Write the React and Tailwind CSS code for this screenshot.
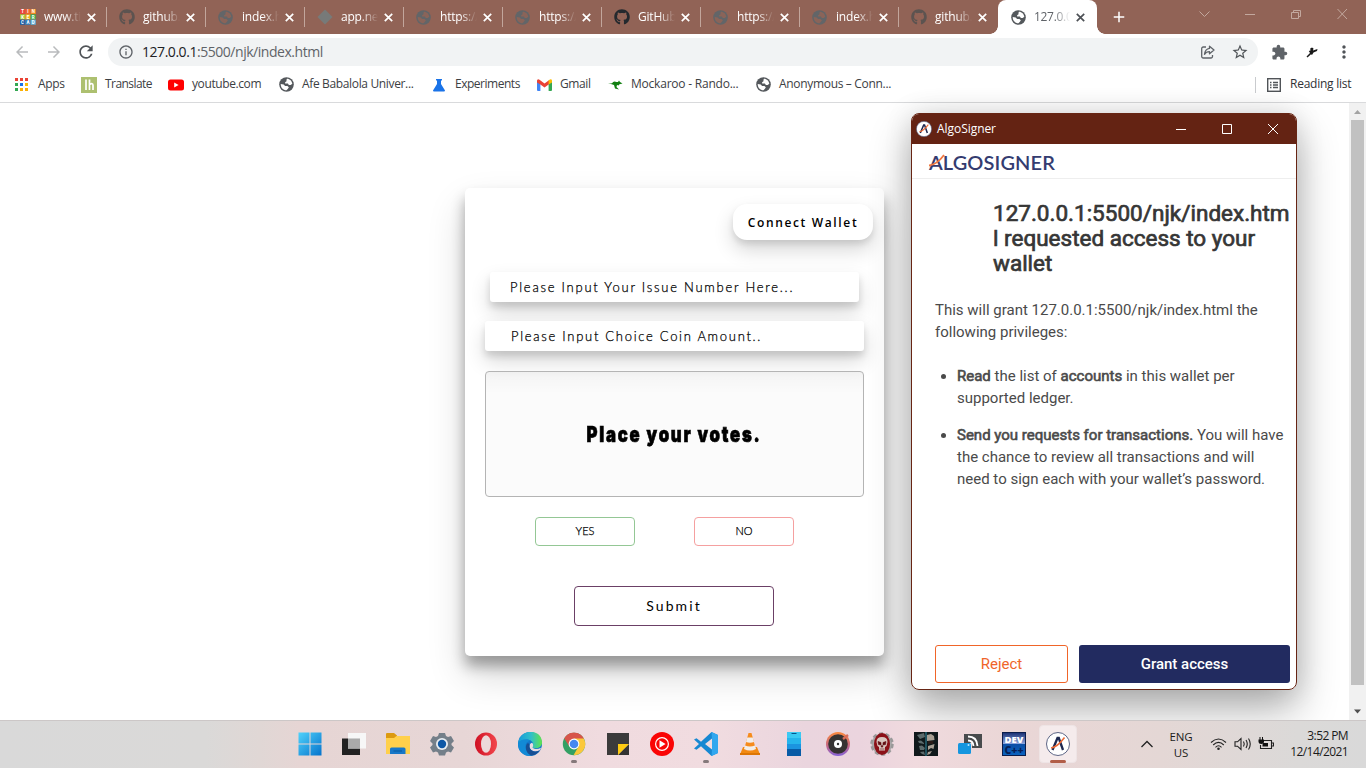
import React from "react";
import {
  MdRefresh, MdArrowBack, MdArrowForward, MdInfoOutline,
  MdStarBorder, MdExtension, MdMoreVert, MdAdd,
} from "react-icons/md";
import { FaGithub } from "react-icons/fa";

const UI = "font-['Open_Sans','Noto_Sans',sans-serif]";

function Tinkercad() {
  const rows = [
    ["#e8453c", "#f0642d", "#f58a1f", "TIN"],
    ["#a9c93a", "#f5b81f", "#3fae49", "KER"],
    ["#1d5fa8", "#2f7fc0", "#5fb3de", "CAD"],
  ];
  return (
    <svg width="16" height="16" viewBox="0 0 15 15" className="shrink-0">
      {rows.map((r, y) =>
        [0, 1, 2].map((x) => (
          <g key={`${x}${y}`}>
            <rect x={x * 5} y={y * 5} width="4.8" height="4.8" fill={r[x]} />
            <text x={x * 5 + 2.4} y={y * 5 + 4} fontSize="4.2" fontWeight="700" textAnchor="middle" fill="#fff" fontFamily="Roboto">{r[3][x]}</text>
          </g>
        ))
      )}
    </svg>
  );
}

function Globe({ fill, land }) {
  return (
    <svg width="15" height="15" viewBox="0 0 16 16" className="shrink-0">
      <circle cx="8" cy="8" r="7.800" fill={fill} />
      <path d="M8.500 1.800C11.500 1.800 14 4.300 14.200 7.300L12.500 8.500H10.500L9.500 7H6.500V5.500L8 4.500V3Z" fill={land} />
      <path d="M1.800 7.500 5 8 6.500 9.500H9L10.500 11 9.500 12.500 8 14.200C4.500 14.200 1.800 11.500 1.800 7.500Z" fill={land} />
    </svg>
  );
}

function Cross({ color, className }) {
  return (
    <svg width="9" height="9" viewBox="0 0 9 9" className={`shrink-0 ${className}`}><path d="M.8.8 8.200 8.200M8.200.8.8 8.200" stroke={color} strokeWidth="1.700" /></svg>
  );
}

const tabs = [
  { kind: "tinker", label: "www.tinkercad" },
  { kind: "github", label: "github.com" },
  { kind: "globe", label: "index.html" },
  { kind: "diamond", label: "app.netlify" },
  { kind: "globe", label: "https://127" },
  { kind: "globe", label: "https://127" },
  { kind: "githubDark", label: "GitHub - C" },
  { kind: "globe", label: "https://127" },
  { kind: "globe", label: "index.html" },
  { kind: "github", label: "github.com" },
];

function TabIcon({ kind }) {
  if (kind === "tinker") return <Tinkercad />;
  if (kind === "github") return <FaGithub size={16} color="#5c5350" className="shrink-0" />;
  if (kind === "githubDark") return <FaGithub size={16} color="#24292e" className="shrink-0" />;
  if (kind === "diamond")
    return (
      <svg width="16" height="16" viewBox="0 0 16 16" className="shrink-0"><path d="M8 0.5 15.500 8 8 15.500.5 8Z" fill="#777a79" /></svg>
    );
  return <div className="flex w-4 shrink-0"><Globe fill="#626568" land="#8a6459" /></div>;
}

function TabBar() {
  return (
    <div className="flex h-[34px] shrink-0 bg-[#916356] pl-[9px]">
      {tabs.map((t, i) => (
        <div key={i} className={`flex h-[34px] shrink-0 items-center pl-[11px] ${i === 9 ? "w-[98px]" : "w-[99px]"}`}>
          <TabIcon kind={t.kind} />
          <div className={`${UI} ml-2 w-[37px] overflow-hidden whitespace-nowrap text-[12px] tracking-[-0.2px] text-white [mask-image:linear-gradient(90deg,#000_55%,transparent)]`}>{t.label}</div>
          <Cross color="#fff" className="ml-[6px]" />
          <div className={`mr-px ml-auto h-5 w-px ${i === 9 ? "bg-transparent" : "bg-[#c2a69c]"}`} />
        </div>
      ))}
      <div className="relative flex h-[34px] w-[99px] shrink-0 items-center rounded-t-[8px] bg-white pl-[13px]">
        <div className="absolute bottom-0 -left-2 h-2 w-2 bg-[radial-gradient(circle_at_0_0,transparent_7.5px,#fff_8px)]" />
        <div className="absolute bottom-0 -right-2 h-2 w-2 bg-[radial-gradient(circle_at_100%_0,transparent_7.5px,#fff_8px)]" />
        <Globe fill="#54585c" land="#fff" />
        <div className={`${UI} ml-2 w-[36px] overflow-hidden whitespace-nowrap text-[12px] tracking-[-0.3px] text-[#5f6368] [mask-image:linear-gradient(90deg,#000_55%,transparent)]`}>127.0.0.1:5500</div>
        <Cross color="#4d5156" className="ml-[6px]" />
      </div>
      <MdAdd size={18} color="#fff" className="mt-2 ml-[13px]" />
      <svg width="150" height="16" viewBox="0 0 150 16" className="mt-[6px] ml-[70px]" fill="none" stroke="#c3a89e">
        <path d="M1.500 5.500 6.500 10.500 11.500 5.500M47 8.500H57M93.500 6.500H100.500V12.500H93.500ZM95.500 6.500V4.500H102.500V10.500H100.500M139.500 3 149 13M149 3 139.500 13" />
      </svg>
    </div>
  );
}

function Toolbar() {
  return (
    <div className="flex h-[34px] shrink-0 items-center bg-white pt-1 pb-[2px] pl-[13px]">
      <MdArrowBack size={18} color="#b9bbbd" />
      <MdArrowForward size={18} color="#b9bbbd" className="ml-[14px]" />
      <MdRefresh size={20} color="#505458" className="ml-[13px]" />
      <div className="ml-[12px] flex h-7 w-[1150px] items-center rounded-full bg-[#f1f3f4] pl-[10px]">
        <MdInfoOutline size={16} color="#5f6368" />
        <div className={`${UI} ml-2 -mt-px text-[14px] tracking-[-0.46px] text-[#5f6368]`}><span className="text-[#202124]">127.0.0.1</span>:5500/njk/index.html</div>
        <svg width="16" height="16" viewBox="0 0 16 16" className="ml-auto" fill="none" stroke="#5f6368" strokeWidth="1.300">
          <path d="M6 3H3.200A1.500 1.500 0 0 0 1.700 4.500V12.500A1.500 1.500 0 0 0 3.200 14H11A1.500 1.500 0 0 0 12.500 12.500V11" />
          <path d="M9.500 2.200 14 6 9.500 9.800V7.700C7 7.700 5.600 8.600 4.500 10.300 4.800 7.500 6.500 4.800 9.500 4.400Z" strokeLinejoin="round" />
        </svg>
        <MdStarBorder size={18} color="#505458" className="mr-[9px] ml-[15px]" />
      </div>
      <MdExtension size={17} color="#5f6368" className="ml-[13px]" />
      <svg width="14" height="14" viewBox="0 0 14 14" className="ml-[17px]">
        <path d="M1.500 11.500 5 8 3.800 6 5.500 5.500 5.200 3.500 7 2.500 8.500 3.500 8 5.500 12.500 4 12 6 8.500 7.500 7 10 6 9.200 2.500 12.500Z" fill="#191919" />
      </svg>
      <MdMoreVert size={20} color="#505458" className="ml-[15px]" />
    </div>
  );
}

const appDots = ["#ea4335", "#ea4335", "#ea4335", "#34a853", "#1a73e8", "#fbbc04", "#34a853", "#fbb004", "#fbb004"];

function Bookmark({ w, icon, label, gap, track }) {
  return (
    <div className={`flex shrink-0 items-center ${w}`}>
      {icon}
      <span className={`${UI} -mt-px whitespace-nowrap text-[12px] text-[#3c4043] ${gap} ${track}`}>{label}</span>
    </div>
  );
}

function Bookmarks() {
  return (
    <div className="flex h-[35px] shrink-0 items-center border-b border-[#d9dadc] bg-white pb-px pl-[15px]">
      <Bookmark w="w-[66px]" gap="ml-[10px]" track="tracking-[-0.3px]" label="Apps" icon={
        <svg width="13" height="13" viewBox="0 0 13 13">
          {appDots.map((c, i) => <rect key={i} x={(i % 3) * 5} y={Math.floor(i / 3) * 5} width="3" height="3" fill={c} />)}
        </svg>
      } />
      <Bookmark w="w-[87px]" gap="ml-[8px]" track="tracking-[-0.55px]" label="Translate" icon={
        <svg width="16" height="16" viewBox="0 0 16 16"><rect width="16" height="16" fill="#adc070" /><path d="M5 2.500V13M8.500 2.500V13M8.500 7.500Q12 5.500 12 8.500V13" fill="none" stroke="#fff" strokeWidth="1.700" /></svg>
      } />
      <Bookmark w="w-[110px]" gap="ml-[8px]" track="tracking-[-0.4px]" label="youtube.com" icon={
        <svg width="16" height="16" viewBox="0 0 16 16"><rect y="2.500" width="16" height="11" rx="2.500" fill="#f00" /><path d="M6.200 5.500V10.500L10.600 8Z" fill="#fff" /></svg>
      } />
      <Bookmark w="w-[154px]" gap="ml-[8px]" track="tracking-[-0.35px]" label="Afe Babalola Univer..." icon={<div className="ml-px"><Globe fill="#54585c" land="#fff" /></div>} />
      <Bookmark w="w-[104px]" gap="ml-[9px]" track="tracking-[-0.48px]" label="Experiments" icon={
        <svg width="14" height="14" viewBox="0 0 14 14"><path d="M4 1H10V2.500H9V6L13 12.500Q13 13.500 12 13.500H2Q1 13.500 1 12.500L5 6V2.500H4Z" fill="#1a73e8" /></svg>
      } />
      <Bookmark w="w-[72px]" gap="ml-[8px]" track="tracking-[-0.4px]" label="Gmail" icon={
        <svg width="15" height="12" viewBox="0 0 15 12" className="ml-px"><path d="M0 1.500 3.400 4V12H1Q0 12 0 11Z" fill="#4285f4" /><path d="M15 1.500 11.600 4V12H14Q15 12 15 11Z" fill="#34a853" /><path d="M0 3.500V1.500Q.8-.5 2.500.8L7.500 4.600 12 1.200V5.200L7.500 8.600 3.400 5.500Z" fill="#ea4335" /><path d="M11.600 5.500V1.500Q14.500-1 15 1.700V3.500Z" fill="#fbbc04" /></svg>
      } />
      <Bookmark w="w-[147px]" gap="ml-[8px]" track="tracking-[-0.22px]" label="Mockaroo - Rando..." icon={
        <svg width="15" height="14" viewBox="0 0 15 14"><path d="M0 6 4 5.200Q5.500 2.500 8.500 4L10 4 11 2.500 12 4 14.500 5.500 11.500 6.200 10.500 7.500 9 7 8.500 9 11 11.500 7 10.500 6 7 3 6Z" fill="#118011" /></svg>
      } />
      <Bookmark w="w-[500px]" gap="ml-[8px]" track="tracking-[-0.32px]" label="Anonymous – Conn..." icon={<div className="ml-px"><Globe fill="#54585c" land="#fff" /></div>} />
      <div className="h-4 w-px bg-[#c9cbce]" />
      <svg width="14" height="14" viewBox="0 0 14 14" className="ml-[11px]" fill="none" stroke="#505458"><rect x=".7" y=".7" width="12.600" height="12.600" strokeWidth="1.400" /><path d="M3 4.500H4.500M3 7H4.500M3 9.500H4.500M6 4.500H11M6 7H11M6 9.500H11" strokeWidth="1.300" /></svg>
      <span className={`${UI} -mt-px ml-[9px] whitespace-nowrap text-[12px] tracking-[-0.25px] text-[#303236]`}>Reading list</span>
    </div>
  );
}

const fieldShadow = "shadow-[0_10px_20px_rgba(0,0,0,0.16),0_5px_7px_rgba(0,0,0,0.12)]";
const fieldText = "text-[13px] font-light text-black [-webkit-text-stroke:0.25px_#000]";

function VoteCard() {
  return (
    <div className="mt-[85px] ml-[465px] flex h-[468px] w-[419px] shrink-0 flex-col rounded-[5px] bg-white font-[Lato,sans-serif] text-black shadow-[0_19px_38px_rgba(0,0,0,0.16),0_10px_14px_rgba(0,0,0,0.32)]">
      <button className="mt-4 mr-[11px] flex h-9 w-[140px] items-center justify-center self-end rounded-[14px] bg-white pt-[2px] font-['Open_Sans',sans-serif] text-[12px] font-semibold tracking-[1.65px] shadow-[0_10px_20px_rgba(0,0,0,0.16),0_4px_6px_rgba(0,0,0,0.10)]">Connect Wallet</button>
      <div className={`mt-8 ml-[25px] flex h-[30px] w-[369px] items-center rounded-[3px] bg-white pt-[2px] pl-5 tracking-[1.76px] ${fieldText} ${fieldShadow}`}>Please Input Your Issue Number Here...</div>
      <div className={`mt-[19px] ml-5 flex h-[30px] w-[379px] items-center rounded-[3px] bg-white pt-[2px] pl-[26px] tracking-[1.72px] ${fieldText} ${fieldShadow}`}>Please Input Choice Coin Amount..</div>
      <div className="mt-5 ml-5 flex h-[126px] w-[379px] items-center justify-center rounded-[4px] border border-[#b4b4b4] bg-[linear-gradient(rgba(0,0,0,0.045),rgba(0,0,0,0.016)_22px)]">
        <span className="scale-x-[0.76] whitespace-nowrap font-[Inter,sans-serif] text-[22px] font-black tracking-[2.3px] [-webkit-text-stroke:0.7px_#000]">Place your votes.</span>
      </div>
      <div className="mt-5 ml-[70px] flex gap-[59px]">
        <button className="h-[29px] w-[100px] rounded-[4px] border border-[#94c795] text-[11px] font-light [-webkit-text-stroke:0.25px_#000]">YES</button>
        <button className="h-[29px] w-[100px] rounded-[4px] border border-[#f5a0a0] text-[11px] font-light [-webkit-text-stroke:0.25px_#000]">NO</button>
      </div>
      <button className="mt-10 ml-[109px] h-10 w-[200px] rounded-[4px] border border-[#6b4066] pb-[2px] text-[14px] tracking-[2.1px]">Submit</button>
    </div>
  );
}

function AlgoMark({ size }) {
  return (
    <svg width={size} height={size} viewBox="0 0 24 24">
      <circle cx="12" cy="12" r="11.500" fill="#fff" stroke="#354068" strokeWidth=".8" />
      <path d="M6.500 18 11.500 6H12.800L17 18" fill="none" stroke="#1d2850" strokeWidth="2.300" />
      <path d="M5 16Q11 15.500 18.500 5.500" fill="none" stroke="#ec6a37" strokeWidth="1.600" />
    </svg>
  );
}

const heavy = "font-normal [-webkit-text-stroke:0.6px_#4a4a4a]";

function Popup() {
  return (
    <div className="absolute top-[113px] left-[911px] flex h-[577px] w-[386px] flex-col overflow-hidden rounded-[8px] border border-[#672514] bg-white font-[Roboto,sans-serif]">
      <div className="flex h-[30px] shrink-0 items-center bg-[#642313] pl-1">
        <AlgoMark size={16} />
        <span className={`${UI} ml-[5px] text-[12px] tracking-[-0.05px] text-white`}>AlgoSigner</span>
        <svg width="104" height="12" viewBox="0 0 104 12" className="mr-[17px] ml-auto" fill="none" stroke="#fff"><path d="M1 6.500H11M47.500 1.500H56.500V10.500H47.500ZM93 1 103 11M103 1 93 11" /></svg>
      </div>
      <div className="flex h-[35px] shrink-0 items-center border-b border-[#eee] pt-[2px] pl-[17px]">
        <div className="relative font-[Lato,sans-serif] text-[20px] leading-none font-semibold tracking-[0.1px] whitespace-nowrap text-[#343c70]">
          ALGOSIGNER
          <svg width="18" height="16" viewBox="0 0 18 16" className="absolute top-[2px] left-0"><path d="M0 11.500Q8 10.500 15 1" fill="none" stroke="#f07740" strokeWidth="1.800" /></svg>
        </div>
      </div>
      <h1 className="mt-[22px] ml-[81px] text-[22.500px] leading-[25px] whitespace-nowrap text-[#363636] [-webkit-text-stroke:0.7px_#363636]">127.0.0.1:5500/njk/index.htm<br />l requested access to your<br />wallet</h1>
      <div className="ml-[23px] text-[15px] leading-[22px] whitespace-nowrap text-[#4a4a4a]">
        <p className="mt-[23px]">This will grant 127.0.0.1:5500/njk/index.html the<br />following privileges:</p>
        <ul className="mt-[22px] ml-[22px] list-disc">
          <li><b className={heavy}>Read</b> the list of <b className={heavy}>accounts</b> in this wallet per<br />supported ledger.</li>
          <li className="mt-[15px]"><b className={heavy}>Send you requests for transactions.</b> You will have<br />the chance to review all transactions and will<br />need to sign each with your wallet’s password.</li>
        </ul>
      </div>
      <div className="mt-auto mb-[6px] ml-[23px] flex gap-[11px] text-[15px]">
        <button className="h-[38px] w-[133px] rounded-[3px] border border-[#f06529] text-[#f06529]">Reject</button>
        <button className="h-[38px] w-[211px] rounded-[3px] bg-[#222b60] font-medium text-white">Grant access</button>
      </div>
    </div>
  );
}

const icons = [
  <svg viewBox="0 0 24 24"><defs><linearGradient id="win" x1="0" y1="0" x2="1" y2="1"><stop offset="0" stopColor="#4fd2fb" /><stop offset="1" stopColor="#0573cc" /></linearGradient></defs><path d="M.5.5H11.500V11.500H.5ZM12.500.5H23.500V11.500H12.500ZM.5 12.500H11.500V23.500H.5ZM12.500 12.500H23.500V23.500H12.500Z" fill="url(#win)" /></svg>,
  <svg viewBox="0 0 24 24"><rect x="0" y="6.500" width="18" height="16.500" fill="#222" /><rect x="6" y="1" width="18" height="15.500" fill="#f7f7f7" /><rect x="6" y="6.500" width="12" height="10" fill="#aaa" /></svg>,
  <svg viewBox="0 0 24 24"><path d="M0 2Q0 1 1 1H8L11 3.500V8H0Z" fill="#dc9a10" /><path d="M0 6H8L10.500 4H24V22H0Z" fill="#ffd04b" /><path d="M4 22V17Q4 15.500 5.500 15.500H18Q19.500 15.500 19.500 17V22Z" fill="#1778c8" /><path d="M7.500 19H16" stroke="#08589f" /></svg>,
  <svg viewBox="0 0 24 24"><path d="M9 1H15L16 4 18 5 21 4 24 9 21.500 11.500V13L24 15.500 21 20.500 18 19.500 16 20.500 15 23.500H9L8 20.500 6 19.500 3 20.500 0 15.500 2.500 13V11.500L0 9 3 4 6 5 8 4Z" fill="#747f89" /><circle cx="12" cy="12" r="6" fill="#e8edf1" /><circle cx="12" cy="12" r="4.200" fill="#0d58a6" /></svg>,
  <svg viewBox="0 0 24 24"><defs><linearGradient id="op"><stop offset="0" stopColor="#cf1024" /><stop offset="1" stopColor="#f2474c" /></linearGradient></defs><ellipse cx="12" cy="12" rx="11" ry="11.500" fill="url(#op)" /><ellipse cx="12" cy="12" rx="5" ry="8.700" fill="#ecd9da" /></svg>,
  <svg viewBox="0 0 24 24"><defs><linearGradient id="ed"><stop offset="0" stopColor="#159bd9" /><stop offset=".55" stopColor="#31bfc9" /><stop offset="1" stopColor="#60e34c" /></linearGradient></defs><circle cx="12" cy="12" r="12" fill="#1475c8" /><path d="M0 12C1-4 24-4 24 10.500 24 16 17.500 17.500 14.500 15.500 17 11 13 7.500 9 7.500 4 7.500 0 10.500 0 12Z" fill="url(#ed)" /><path d="M0 12C1 7.500 8 6 12.500 9 9 9 7.200 12 7.600 15 8.200 19.500 12 23 15 23.500 6 25.500-.3 19 0 12Z" fill="#128ad6" /><path d="M14.500 15.500C16.500 17.500 20 17.500 23 15.800 22.800 16.600 22.400 17.500 21.900 18.300 17 21 11.500 18.500 11.500 14.500 11.500 12.500 12.500 11.300 14 10.800 15.600 12 15.500 13.800 14.500 15.500Z" fill="#e9dbe1" /><path d="M11.500 13.500C11 18 16 21.500 21.900 18.300 19 22.500 15 24 12.500 23.300 8.500 21 7 16.500 8.300 13 9.300 10.500 11.500 11 11.500 13.500Z" fill="#174f94" /></svg>,
  <svg viewBox="0 0 24 24"><circle cx="12" cy="12" r="11.200" fill="#34a064" /><path d="M2.300 6.400A11.200 11.200 0 0 1 21.700 6.400L12 9Z" fill="#d7544a" /><path d="M2.300 6.400A11.200 11.200 0 0 1 21.700 6.400H12L7 14Z" fill="#d7544a" /><path d="M21.700 6.400A11.200 11.200 0 0 1 11.500 23.200L16.800 14 12 6.400Z" fill="#fbc83b" /><circle cx="12" cy="12" r="5.400" fill="#fff" /><circle cx="12" cy="12" r="4.300" fill="#4688f1" /></svg>,
  <svg viewBox="0 0 24 24"><path d="M1 1H23V12L12 23H1Z" fill="#3b3b3b" /><path d="M23 12V23H12Z" fill="#333" /><path d="M12 12H23L12 23Z" fill="#fecb12" /></svg>,
  <svg viewBox="0 0 24 24"><circle cx="12" cy="12" r="12" fill="#fa0505" /><circle cx="12" cy="12" r="6.400" fill="none" stroke="#fff" strokeWidth="1.200" /><path d="M9.500 8.300V15.700L15.600 12Z" fill="#fff" /></svg>,
  <svg viewBox="0 0 24 24"><path d="M17.500 0 24 3V21L17.500 24 7 14.300 2.500 17.800 0 16.500 5 12 0 7.500 2.500 6.200 7 9.700ZM18 6.500 11 12 18 17.500Z" fill="#1788d2" fillRule="evenodd" /><path d="M17.500 0 24 3V21L17.500 24 18 17.500V6.500Z" fill="#31a7ef" /></svg>,
  <svg viewBox="0 0 24 24"><path d="M5 15H19L22 22.500H2Z" fill="#f28a12" /><path d="M10.500 1H13.500L18 18Q12 21 6 18Z" fill="#f68b1c" /><path d="M9.300 5.500H14.700L16 10Q12 11.500 8 10ZM7 13.500Q12 15.500 17 13.500L18 17Q12 20 6 17Z" fill="#f2eee9" /><path d="M2 21H22V23H2Z" fill="#dd7605" /></svg>,
  <svg viewBox="0 0 24 24"><rect x="5" y="0" width="14" height="24" fill="#3bc9f3" /><path d="M5 6H19V12H5Z" fill="#25b4ec" /><path d="M5 12H19V17H5Z" fill="#1b94e0" /><path d="M5 17H19V24H5Z" fill="#075ba6" /><path d="M9.500 1.500H14.500" stroke="#08548b" /></svg>,
  <svg viewBox="0 0 24 24"><defs><linearGradient id="rec" x2="0" y2="1"><stop offset="0" stopColor="#fa893c" /><stop offset=".55" stopColor="#c86982" /><stop offset="1" stopColor="#8361d8" /></linearGradient></defs><circle cx="12" cy="12" r="12" fill="url(#rec)" /><circle cx="12" cy="12" r="9.800" fill="#353232" /><circle cx="12" cy="12" r="4" fill="#fff" /><circle cx="12" cy="12" r="1.200" fill="#333" /><path d="M17 7 22 3" stroke="#d96c58" strokeWidth="2.500" /></svg>,
  <svg viewBox="0 0 24 24"><circle cx="12" cy="12" r="10.500" fill="#aaa" stroke="#999" strokeWidth="2.500" strokeDasharray="4 2.600" /><ellipse cx="12" cy="12" rx="8" ry="11" fill="#8b1118" /><path d="M12 5Q17.500 5 17.500 10L16.500 14 15 15V18.500H9V15L7.500 14 6.500 10Q6.500 5 12 5Z" fill="#d9c6bf" /><path d="M8 9.500 11 10.500V13L8.500 12.500ZM16 9.500 13 10.500V13L15.500 12.500ZM12 13 13 15H11ZM9.500 17H14.500" fill="#5f0c10" stroke="#5f0c10" strokeWidth=".6" /></svg>,
  <svg viewBox="0 0 24 24"><rect width="24" height="24" fill="#10191b" /><path d="M3 3 10 1 11 5 6 7ZM4 9 7 8.500 10 11V12L5 11ZM5 14 8 13.500 11 16 10 18 6 18ZM6 20 10 19.500 11 23 8 22Z" fill="#5c6b6c" /><path d="M13 3 17 2 20 4 20.500 8 13 9ZM14 14 20.500 12 19.500 17 17 16 14 18ZM14 20 18 19 16 22 13 23Z" fill="#a89f93" /><path d="M12 0V24" stroke="#2f8ca3" /><path d="M14 9 19.500 9 19 12 14 12Z" fill="#2a1c18" /></svg>,
  <svg viewBox="0 0 24 24"><path d="M6 2H24V16H14V11H6Z" fill="#484b4d" /><path d="M10 4.500Q19 4.500 19.500 14M10 8.500Q15 8.500 15.500 14" fill="none" stroke="#fff" strokeWidth="1.800" /><rect x="0" y="11" width="13" height="11" rx="1.500" fill="#1596df" /><circle cx="10.500" cy="13" r="1" fill="#bce8ff" /></svg>,
  <svg viewBox="0 0 24 24"><defs><linearGradient id="dv" x2="0" y2="1"><stop offset="0" stopColor="#1c3376" /><stop offset=".48" stopColor="#8aa3dc" /><stop offset=".52" stopColor="#0c4fa6" /><stop offset="1" stopColor="#0a62be" /></linearGradient></defs><rect width="24" height="24" fill="#0b1d4b" /><rect x="1" y="1" width="22" height="22" fill="url(#dv)" /><text x="12" y="11" fontSize="9.500" fontWeight="800" fill="#fff" textAnchor="middle" fontFamily="Open Sans">DEV</text><text x="12" y="21.500" fontSize="10.500" fontWeight="800" fill="#061f57" textAnchor="middle" fontFamily="Open Sans">C++</text></svg>,
];

function Taskbar() {
  return (
    <div className="relative flex h-12 shrink-0 border-t border-[#ccc7c7] bg-[linear-gradient(90deg,#d9d9d9_0%,#dad9d8_15%,#e0d7d5_19%,#e6d5d4_22%,#e7d6d6_34%,#f0dbdf_44%,#f1dce0_52%,#ead5de_59%,#ebd4de_63%,#f0dade_67%,#ead6d6_74%,#e4d7d5_85%,#dbd9d8_95%,#d9d9d9_100%)] pl-[288px]">
      {icons.map((ic, i) => (
        <div key={i} className="flex h-[47px] w-[44px] shrink-0 flex-col items-center pt-[11px]">
          <div className="h-6 w-6">{ic}</div>
          {(i === 6 || i === 9) && <div className="mt-[4px] h-[3px] w-[6px] rounded-full bg-[#85797b]" />}
        </div>
      ))}
      <div className="mt-1 ml-[3px] flex h-[38px] w-[38px] flex-col items-center rounded-[4px] border border-[#eee4e5] bg-[#f5ebec] pt-[6px]">
        <div className="h-6"><AlgoMark size={24} /></div>
        <div className="mt-[4px] h-[3px] w-4 shrink-0 rounded-full bg-[#b25e48]" />
      </div>
      <svg width="14" height="14" viewBox="0 0 14 14" className="mt-[16px] ml-[63px]" fill="none" stroke="#222" strokeWidth="1.300"><path d="M1.500 10 7 4.500 12.500 10" /></svg>
      <div className={`${UI} mt-2 ml-[13px] w-[28px] text-center text-[11.500px] leading-4 tracking-[-0.1px] text-[#1b1b1b]`}>ENG<br />US</div>
      <svg width="64" height="16" viewBox="0 0 64 16" className="mt-[15px] ml-[15px]" fill="none" stroke="#222" strokeWidth="1.100">
        <path d="M1 6.500Q8.500-.5 16 6.500M3.200 9Q8.500 3.800 13.800 9M5.500 11.300Q8.500 8.300 11.500 11.300" />
        <circle cx="8.500" cy="12.800" r="1.300" fill="#222" stroke="none" />
        <path d="M25 5.800H27.500L31 2.500V13.500L27.500 10.200H25ZM33.500 5.500Q35 8 33.500 10.500M36 4Q38.500 8 36 12M38.500 2.500Q42 8 38.500 13.500" />
        <path d="M54 4.500H61.500V12.500H50.500V9M61.500 7H63.500V10H61.500" />
        <path d="M53.500 7H58V10.500H52.500V8.500ZM48.500 3.500H54V6Q54 8 51.300 8T48.500 6ZM49.500 1H50.500V4H49.500ZM52 1H53V4H52Z" fill="#111" stroke="none" />
      </svg>
      <div className={`${UI} mt-[7px] ml-auto mr-[18px] text-right text-[12px] leading-4 tracking-[-0.6px] whitespace-nowrap text-[#1b1b1b]`}>3:52 PM<br />12/14/2021</div>
    </div>
  );
}

export default function App() {
  return (
    <div className="relative flex h-[768px] w-[1366px] flex-col overflow-hidden bg-white">
      <TabBar />
      <Toolbar />
      <Bookmarks />
      <div className="flex min-h-0 flex-1">
        <div className="flex flex-1 flex-col"><VoteCard /></div>
        <div className="flex w-[17px] shrink-0 flex-col items-center bg-[#f1f1f1]">
          <svg width="17" height="17" viewBox="0 0 17 17"><path d="M5 11H12L8.500 7Z" fill="#a3a3a3" /></svg>
          <div className="h-[565px] w-[13px] bg-[#c1c1c1]" />
          <svg width="17" height="17" viewBox="0 0 17 17" className="mt-auto"><path d="M5 6.500H12L8.500 10.500Z" fill="#505050" /></svg>
        </div>
      </div>
      <div className="absolute top-[34px] left-0 h-[686px] w-[1349px] overflow-hidden">
        <div className="absolute top-[79px] left-[911px] h-[577px] w-[386px] rounded-[8px] shadow-[0_20px_42px_rgba(0,0,0,0.3),0_0_28px_rgba(0,0,0,0.12)]" />
      </div>
      <Popup />
      <Taskbar />
    </div>
  );
}
